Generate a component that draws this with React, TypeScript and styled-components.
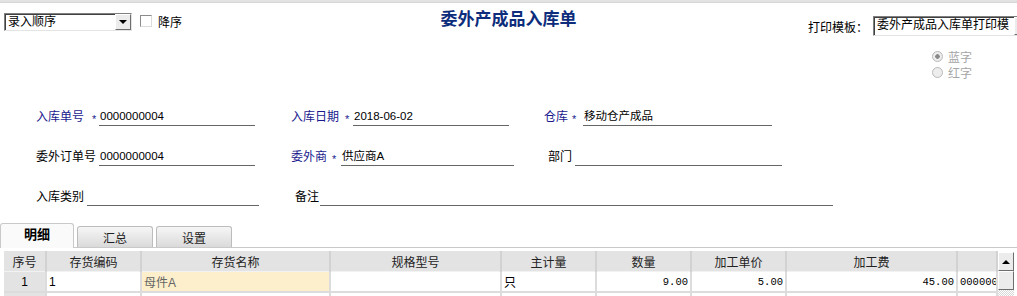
import React from 'react';
import styled, { createGlobalStyle } from 'styled-components';

const GlobalStyle = createGlobalStyle`
  html, body {
    margin: 0;
    padding: 0;
    background: #fff;
  }
`;

const Page = styled.div`
  width: 1017px;
  height: 296px;
  overflow: hidden;
  background: #fff;
  font-family: 'Liberation Sans', 'Noto Sans CJK SC', sans-serif;
  font-size: 12px;
  color: #000;
`;

const TopStrip = styled.div`
  height: 3px;
  background: #e2e2e2;
  border-bottom: 1px solid #d6d6d6;
  box-sizing: border-box;
`;

const Header = styled.div`
  display: grid;
  grid-template-columns: 1fr auto 1fr;
  height: 105px;
`;

const LeftTools = styled.div`
  display: flex;
  align-items: flex-start;
  gap: 8px;
  padding: 10px 0 0 4px;
`;

const Select = styled.div<{ width: number }>`
  width: ${props => props.width}px;
  height: 18px;
  box-sizing: border-box;
  display: flex;
  flex: none;
  border-top: 1px solid #808080;
  border-left: 1px solid #808080;
  border-right: 1px solid #e4e4e4;
  border-bottom: 1px solid #e4e4e4;
  box-shadow: inset 1px 1px 0 #404040;
  background: #fff;
  overflow: hidden;
`;

const SelectText = styled.div`
  flex: 1;
  padding: 0 0 0 3px;
  line-height: 16px;
  white-space: nowrap;
  overflow: hidden;
`;

const DropButton = styled.div`
  width: 16px;
  flex: none;
  box-sizing: border-box;
  background: #ececec;
  border-top: 1px solid #fff;
  border-left: 1px solid #fff;
  border-right: 1px solid #6e6e6e;
  border-bottom: 1px solid #6e6e6e;
  display: flex;
  align-items: center;
  justify-content: center;

  &::after {
    content: '';
    border-left: 4px solid transparent;
    border-right: 4px solid transparent;
    border-top: 4px solid #000;
  }
`;

const Check = styled.label`
  display: flex;
  align-items: center;
  gap: 6px;
  height: 14px;
  margin-top: 1px;
`;

const CheckBox = styled.span`
  width: 12px;
  height: 12px;
  box-sizing: border-box;
  border: 1px solid #8c8c8c;
  border-right-color: #dcdcdc;
  border-bottom-color: #dcdcdc;
  background: #fff;
`;

const Title = styled.h1`
  margin: 0;
  padding-top: 7px;
  font-size: 17px;
  line-height: 20px;
  font-weight: 700;
  color: #0d2d7c;
  white-space: nowrap;
`;

const RightTools = styled.div`
  display: flex;
  flex-direction: column;
  align-items: flex-end;
  padding-top: 12px;
`;

const PrintRow = styled.div`
  display: flex;
  align-items: center;
  gap: 5px;
  margin-right: -14px;
  margin-top: 1px;
`;

const TemplateBox = styled.div`
  width: 158px;
  height: 20px;
  box-sizing: border-box;
  display: flex;
  flex: none;
  border-top: 1px solid #808080;
  border-left: 1px solid #808080;
  border-right: 1px solid #e4e4e4;
  border-bottom: 1px solid #e4e4e4;
  box-shadow: inset 1px 1px 0 #404040;
  overflow: hidden;
`;

const RadioGroup = styled.div`
  display: flex;
  flex-direction: column;
  margin-top: 12px;
  margin-right: 45px;
`;

const RadioRow = styled.div`
  display: flex;
  align-items: center;
  gap: 5px;
  height: 16px;
  color: #a6a6a6;
`;

const RadioDot = styled.span<{ checked?: boolean }>`
  width: 11px;
  height: 11px;
  box-sizing: border-box;
  border-radius: 50%;
  border: 1px solid #b8b8b8;
  background: ${props =>
    props.checked
      ? 'radial-gradient(circle, #8a8a8a 0 2px, #ededed 2.5px)'
      : '#ededed'};
`;

const Form = styled.div`
  display: grid;
  grid-template-columns: 255px 253px 1fr;
  row-gap: 22px;
  padding-left: 36px;
`;

const Field = styled.div<{ indent?: number }>`
  display: flex;
  height: 18px;
  padding-left: ${props => props.indent || 0}px;
`;

const Label = styled.span<{ blue?: boolean; gap?: number }>`
  flex: none;
  line-height: 18px;
  white-space: nowrap;
  color: ${props => (props.blue ? '#1a1a8e' : '#000')};
  margin-right: ${props => props.gap ?? 0}px;
`;

const Star = styled.span<{ width: number; left: number }>`
  flex: none;
  box-sizing: border-box;
  width: ${props => props.width}px;
  padding-left: ${props => props.left}px;
  color: #1a1a8e;
  font-size: 11px;
  line-height: 23px;
`;

const Value = styled.span<{ width: number }>`
  flex: none;
  width: ${props => props.width}px;
  height: 18px;
  box-sizing: border-box;
  border-bottom: 1px solid #666;
  padding-left: 1px;
  line-height: 16px;
  white-space: nowrap;
  font-size: 11.5px;
`;

const TabBar = styled.div`
  display: flex;
  align-items: flex-end;
  gap: 3px;
  height: 25px;
  margin-top: 17px;
  box-sizing: border-box;
  border-bottom: 1px solid #c9c9c9;
`;

const Tab = styled.div<{ active?: boolean }>`
  box-sizing: border-box;
  width: ${props => (props.active ? 74 : 76)}px;
  height: ${props => (props.active ? 25 : 21)}px;
  margin-bottom: ${props => (props.active ? -1 : 0)}px;
  border: 1px solid ${props => (props.active ? '#c9c9c9' : '#bcbcbc')};
  border-bottom: none;
  border-radius: 3px 3px 0 0;
  background: ${props =>
    props.active ? '#fafafa' : 'linear-gradient(#f6f6f6, #dadada)'};
  text-align: center;
  font-weight: ${props => (props.active ? 700 : 400)};
  font-size: ${props => (props.active ? 13 : 12)}px;
  line-height: ${props => (props.active ? 22 : 24)}px;
  color: ${props => (props.active ? '#000' : '#222')};
`;

const GridWrap = styled.div`
  display: flex;
  margin-top: 3px;
  padding-left: 4px;
`;

const Table = styled.table`
  width: 993px;
  table-layout: fixed;
  border-collapse: collapse;
  flex: none;
`;

const Th = styled.th`
  height: 20px;
  padding: 0;
  font-weight: 400;
  color: #222;
  background: #e3e3e3;
  border-right: 2px solid #d2d2d2;
  border-bottom: 1px solid #f2f2f2;
  text-align: center;
  white-space: nowrap;
  overflow: hidden;
`;

const Td = styled.td<{ align?: string; tone?: 'head' | 'pick'; mono?: boolean }>`
  height: 19px;
  padding: 0 2px;
  border-right: 2px solid #dcdcdc;
  border-bottom: 2px solid #dcdcdc;
  white-space: nowrap;
  overflow: hidden;
  text-align: ${props => props.align || 'left'};
  font-family: ${props =>
    props.mono ? "'Liberation Mono', monospace" : 'inherit'};
  font-size: ${props => (props.mono ? 10.5 : 12)}px;
  color: ${props => (props.tone === 'pick' ? '#666' : '#000')};
  background: ${props =>
    props.tone === 'head' ? '#e3e3e3' : props.tone === 'pick' ? '#fdefcb' : '#fff'};
`;

const ScrollBar = styled.div`
  width: 16px;
  flex: none;
  display: flex;
  flex-direction: column;
  margin-top: 1px;
  background: repeating-conic-gradient(#d8d8d8 0 25%, #fff 0 50%) 0 0 / 2px 2px;
`;

const ScrollButton = styled.div<{ arrow?: boolean }>`
  height: 19px;
  box-sizing: border-box;
  background: #ececec;
  border-top: 1px solid #fff;
  border-left: 1px solid #fff;
  border-right: 1px solid #6e6e6e;
  border-bottom: 1px solid #6e6e6e;
  display: flex;
  align-items: center;
  justify-content: center;

  &::after {
    content: '';
    display: ${props => (props.arrow ? 'block' : 'none')};
    border-left: 4px solid transparent;
    border-right: 4px solid transparent;
    border-bottom: 4px solid #000;
  }
`;

const columns = [
  { title: '序号', width: 42 },
  { title: '存货编码', width: 95 },
  { title: '存货名称', width: 189 },
  { title: '规格型号', width: 171 },
  { title: '主计量', width: 95 },
  { title: '数量', width: 95 },
  { title: '加工单价', width: 95 },
  { title: '加工费', width: 171 },
  { title: '', width: 40 },
];

export default function App() {
  return (
    <Page>
      <GlobalStyle />
      <TopStrip />
      <Header>
        <LeftTools>
          <Select width={128}>
            <SelectText>录入顺序</SelectText>
            <DropButton />
          </Select>
          <Check>
            <CheckBox />
            降序
          </Check>
        </LeftTools>
        <Title>委外产成品入库单</Title>
        <RightTools>
          <PrintRow>
            <span>打印模板：</span>
            <TemplateBox>
              <SelectText>委外产成品入库单打印模</SelectText>
              <DropButton />
            </TemplateBox>
          </PrintRow>
          <RadioGroup>
            <RadioRow>
              <RadioDot checked />
              蓝字
            </RadioRow>
            <RadioRow>
              <RadioDot />
              红字
            </RadioRow>
          </RadioGroup>
        </RightTools>
      </Header>

      <Form>
        <Field>
          <Label blue>入库单号</Label>
          <Star width={15} left={8}>*</Star>
          <Value width={156}>0000000004</Value>
        </Field>
        <Field>
          <Label blue>入库日期</Label>
          <Star width={14} left={6}>*</Star>
          <Value width={156}>2018-06-02</Value>
        </Field>
        <Field>
          <Label blue>仓库</Label>
          <Star width={15} left={4}>*</Star>
          <Value width={189}>移动仓产成品</Value>
        </Field>

        <Field>
          <Label gap={3}>委外订单号</Label>
          <Value width={156}>0000000004</Value>
        </Field>
        <Field>
          <Label blue>委外商</Label>
          <Star width={14} left={5}>*</Star>
          <Value width={173}>供应商A</Value>
        </Field>
        <Field indent={4}>
          <Label gap={3}>部门</Label>
          <Value width={207} />
        </Field>

        <Field>
          <Label gap={3}>入库类别</Label>
          <Value width={172} />
        </Field>
        <Field indent={4}>
          <Label gap={1}>备注</Label>
          <Value width={513} />
        </Field>
      </Form>

      <TabBar>
        <Tab active>明细</Tab>
        <Tab>汇总</Tab>
        <Tab>设置</Tab>
      </TabBar>

      <GridWrap>
        <Table>
          <colgroup>
            {columns.map((c, i) => (
              <col key={i} style={{ width: c.width }} />
            ))}
          </colgroup>
          <thead>
            <tr>
              {columns.map((c, i) => (
                <Th key={i}>{c.title}</Th>
              ))}
            </tr>
          </thead>
          <tbody>
            <tr>
              <Td tone="head" align="center">1</Td>
              <Td>1</Td>
              <Td tone="pick">母件A</Td>
              <Td />
              <Td>只</Td>
              <Td align="right" mono>9.00</Td>
              <Td align="right" mono>5.00</Td>
              <Td align="right" mono>45.00</Td>
              <Td mono>000000</Td>
            </tr>
            <tr>
              <Td tone="head" />
              <Td />
              <Td />
              <Td />
              <Td />
              <Td />
              <Td />
              <Td />
              <Td />
            </tr>
          </tbody>
        </Table>
        <ScrollBar>
          <ScrollButton arrow />
          <ScrollButton />
        </ScrollBar>
      </GridWrap>
    </Page>
  );
}
